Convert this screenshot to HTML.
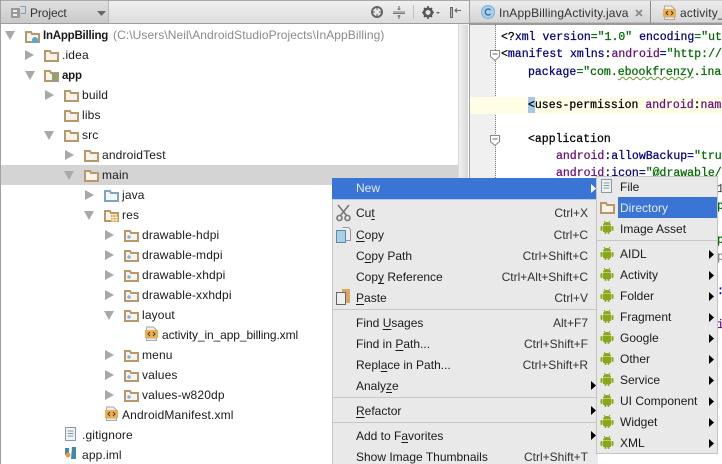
<!DOCTYPE html>
<html><head><meta charset="utf-8">
<style>
html,body{margin:0;padding:0;background:#fff}
#r{position:relative;width:722px;height:464px;overflow:hidden;background:#fff;font-family:"Liberation Sans",sans-serif;font-size:12px;color:#1a1a1a}
.t{position:absolute;white-space:nowrap;line-height:16px;letter-spacing:.15px}
.t b{font-size:11.5px;letter-spacing:-.22px}
.n{letter-spacing:0}
.b{position:absolute}
svg{position:absolute;overflow:visible}
.c{position:absolute;white-space:pre;font-family:"Liberation Mono",monospace;font-size:11.5px;line-height:16px;color:#000;-webkit-text-stroke:.25px}
.k{color:#000080}.g{color:#006a00}.p{color:#660e7a}
u{text-underline-offset:2px}
.s{text-align:right;color:#333;letter-spacing:0}
</style></head><body><div id="r">
<svg width="0" height="0" style="position:absolute"><defs>
<symbol id="fold" viewBox="0 0 15 13"><path d="M1 12V2h5l1 2h7v8z" fill="#f6f3ea" stroke="#b8986a" stroke-width="2"/></symbol>
<symbol id="res" viewBox="0 0 15 13"><path d="M1 12V2h5l1 2h7v8z" fill="#f5f5f2" stroke="#b8986a" stroke-width="2"/><circle cx="5" cy="8" r="1.8" fill="#8fb0cf"/></symbol>
<symbol id="xml" viewBox="0 0 13 15"><path d="M1.500 1h7l3 3v2h-10zM1.500 12h10v2.500h-10z" fill="#eee" stroke="#aaa"/><rect x="0" y="4" width="13" height="8" fill="#e8b050"/><path d="M5 6L3 8l2 2M8 6l2 2-2 2" fill="none" stroke="#5a3a10"/></symbol>
<symbol id="droid" viewBox="0 0 14 14"><path d="M4 1l1 1.500M10 1L9 2.500" stroke="#88a818"/><path d="M3 5.500C3 3 5 2 7 2s4 1 4 3.500z" fill="#88a818"/><rect x="3" y="6" width="8" height="6" fill="#88a818"/><rect x="0.500" y="6" width="2" height="5" rx="1" fill="#88a818"/><rect x="11.500" y="6" width="2" height="5" rx="1" fill="#88a818"/><rect x="4.500" y="11" width="2" height="3" rx="1" fill="#88a818"/><rect x="7.500" y="11" width="2" height="3" rx="1" fill="#88a818"/></symbol>
<symbol id="ad" viewBox="0 0 10 9"><path d="M0 0h10L5 9z" fill="#a8a8a8"/></symbol>
<symbol id="ar" viewBox="0 0 9 10"><path d="M0 0l9 5-9 5z" fill="#a8a8a8"/></symbol>
<symbol id="m" viewBox="0 0 5 9"><path d="M0 0l5 4.500L0 9z" fill="#000"/></symbol>
</defs></svg>

<!-- top bar -->
<div class="b" style="left:0;top:0;width:470px;height:23px;background:linear-gradient(#f0f0f0,#dcdcdc);border-top:1px solid #a8a8a8;box-sizing:border-box"></div>
<div class="b" style="left:1px;top:1px;width:107px;height:22px;background:linear-gradient(#e0e0e0,#c9c9c9);border-right:1px solid #b8b8b8"></div>
<div class="b" style="left:0;top:23px;width:470px;height:1px;background:#9c9c9c"></div>
<div class="b" style="left:0;top:0;width:1px;height:464px;background:#a0a0a0"></div>
<svg style="left:11px;top:6px" width="15" height="13"><rect x="0" y="2" width="9" height="10" fill="#999"/><rect x="2" y="4" width="4" height="2" fill="#eee"/><rect x="2" y="8" width="4" height="2" fill="#eee"/><path d="M9.500 .5h5v7h-5" fill="none" stroke="#7f9fb5"/></svg>
<div class="t" style="left:30px;top:5px;color:#333;letter-spacing:-.1px">Project</div>
<svg style="left:97px;top:11px" width="9" height="5"><path d="M0 0h9L4.500 5z" fill="#666"/></svg>
<svg style="left:371px;top:6px" width="13" height="13"><circle cx="6" cy="6" r="5" fill="none" stroke="#666" stroke-width="2"/><path d="M6 1v3M6 8v3M1 6h3M8 6h3" stroke="#666"/></svg>
<svg style="left:393px;top:6px" width="13" height="13"><path d="M0 6h12M0 7.500h12" stroke="#777"/><path d="M6 0v4M4.500 3h3M6 9v4M4.500 10h3" stroke="#666"/></svg>
<div class="b" style="left:413px;top:5px;width:1px;height:14px;background:#c0c0c0"></div>
<svg style="left:422px;top:6px" width="18" height="13"><circle cx="6" cy="6.500" r="3.800" fill="none" stroke="#555" stroke-width="2.600"/><path d="M6 0v2.500M6 10.500V13M0 6.500h2M10 6.500h2M2 2l1.500 1.500M8.500 9.500L10 11M2 11l1.500-1.500M8.500 3.500L10 2" stroke="#555" stroke-width="1.600"/><path d="M14 6h4l-2 2z" fill="#666"/></svg>
<svg style="left:450px;top:7px" width="12" height="11"><rect x=".5" y=".5" width="2" height="10" fill="#bbb" stroke="#666"/><path d="M5 3.500h6M7 1.500L5 3.500l2 2" fill="none" stroke="#666"/></svg>

<!-- tree scrollbar / divider -->
<div class="b" style="left:458px;top:24px;width:10px;height:440px;background:#f2f2f2;border-left:1px solid #d8d8d8;box-sizing:border-box"></div>
<div class="b" style="left:459px;top:25px;width:9px;height:439px;background:linear-gradient(90deg,#f0f0f0,#d8d8d8);border-radius:2px"></div>
<div class="b" style="left:469px;top:0;width:1px;height:464px;background:#a0a0a0"></div>

<!-- selected row -->
<div class="b" style="left:1px;top:165px;width:457px;height:20px;background:#d4d4d4"></div>

<!-- tree -->
<svg style="left:5px;top:31px" width="10" height="9"><use href="#ad"/></svg>
<svg style="left:25px;top:30px" width="15" height="13"><use href="#fold"/><circle cx="10" cy="10" r="3" fill="#55a5d8"/></svg>
<div class="t" style="left:43px;top:27px"><b>InAppBilling</b></div>
<div class="t" style="left:113px;top:27px;letter-spacing:.08px;color:#8a8a8a">(C:\Users\Neil\AndroidStudioProjects\InAppBilling)</div>

<svg style="left:25px;top:50px" width="9" height="10"><use href="#ar"/></svg>
<svg style="left:44px;top:49px" width="15" height="13"><use href="#fold"/></svg>
<div class="t" style="left:62px;top:47px">.idea</div>

<svg style="left:25px;top:71px" width="10" height="9"><use href="#ad"/></svg>
<svg style="left:44px;top:69px" width="15" height="13"><use href="#fold"/><rect x="8" y="4" width="6" height="9" fill="#999"/><rect x="9.500" y="5.500" width="3" height="5" fill="#8ab030"/></svg>
<div class="t" style="left:62px;top:67px"><b>app</b></div>

<svg style="left:45px;top:90px" width="9" height="10"><use href="#ar"/></svg>
<svg style="left:64px;top:89px" width="15" height="13"><use href="#fold"/></svg>
<div class="t" style="left:82px;top:87px">build</div>

<svg style="left:64px;top:109px" width="15" height="13"><use href="#fold"/></svg>
<div class="t" style="left:82px;top:107px">libs</div>

<svg style="left:44px;top:131px" width="10" height="9"><use href="#ad"/></svg>
<svg style="left:64px;top:129px" width="15" height="13"><use href="#fold"/></svg>
<div class="t" style="left:82px;top:127px">src</div>

<svg style="left:65px;top:150px" width="9" height="10"><use href="#ar"/></svg>
<svg style="left:84px;top:149px" width="15" height="13"><use href="#fold"/></svg>
<div class="t" style="left:102px;top:147px">androidTest</div>

<svg style="left:64px;top:171px" width="10" height="9"><use href="#ad"/></svg>
<svg style="left:84px;top:169px" width="15" height="13"><use href="#fold"/></svg>
<div class="t" style="left:102px;top:167px">main</div>

<svg style="left:85px;top:190px" width="9" height="10"><use href="#ar"/></svg>
<svg style="left:104px;top:189px" width="15" height="13"><path d="M1 12V2h5l1 2h7v8z" fill="#f4f8fb" stroke="#7da5c4" stroke-width="2"/></svg>
<div class="t" style="left:122px;top:187px">java</div>

<svg style="left:84px;top:211px" width="10" height="9"><use href="#ad"/></svg>
<svg style="left:104px;top:209px" width="15" height="13"><use href="#fold"/><rect x="7" y="6" width="7" height="7" fill="#e0a838"/><path d="M9 6v7M12 6v7M7 8.500h7M7 11h7" stroke="#fff" stroke-width=".7"/></svg>
<div class="t" style="left:122px;top:207px">res</div>

<svg style="left:105px;top:230px" width="9" height="10"><use href="#ar"/></svg>
<svg style="left:124px;top:229px" width="15" height="13"><use href="#res"/></svg>
<div class="t" style="left:142px;top:227px">drawable-hdpi</div>
<svg style="left:105px;top:250px" width="9" height="10"><use href="#ar"/></svg>
<svg style="left:124px;top:249px" width="15" height="13"><use href="#res"/></svg>
<div class="t" style="left:142px;top:247px">drawable-mdpi</div>
<svg style="left:105px;top:270px" width="9" height="10"><use href="#ar"/></svg>
<svg style="left:124px;top:269px" width="15" height="13"><use href="#res"/></svg>
<div class="t" style="left:142px;top:267px">drawable-xhdpi</div>
<svg style="left:105px;top:290px" width="9" height="10"><use href="#ar"/></svg>
<svg style="left:124px;top:289px" width="15" height="13"><use href="#res"/></svg>
<div class="t" style="left:142px;top:287px">drawable-xxhdpi</div>
<svg style="left:104px;top:311px" width="10" height="9"><use href="#ad"/></svg>
<svg style="left:124px;top:309px" width="15" height="13"><use href="#res"/></svg>
<div class="t" style="left:142px;top:307px">layout</div>
<svg style="left:145px;top:326px" width="13" height="15"><use href="#xml"/></svg>
<div class="t" style="left:162px;top:327px;letter-spacing:-.1px">activity_in_app_billing.xml</div>
<svg style="left:105px;top:350px" width="9" height="10"><use href="#ar"/></svg>
<svg style="left:124px;top:349px" width="15" height="13"><use href="#res"/></svg>
<div class="t" style="left:142px;top:347px">menu</div>
<svg style="left:105px;top:370px" width="9" height="10"><use href="#ar"/></svg>
<svg style="left:124px;top:369px" width="15" height="13"><use href="#res"/></svg>
<div class="t" style="left:142px;top:367px">values</div>
<svg style="left:105px;top:390px" width="9" height="10"><use href="#ar"/></svg>
<svg style="left:124px;top:389px" width="15" height="13"><use href="#res"/></svg>
<div class="t" style="left:142px;top:387px">values-w820dp</div>
<svg style="left:105px;top:406px" width="13" height="15"><use href="#xml"/></svg>
<div class="t" style="left:122px;top:407px">AndroidManifest.xml</div>
<svg style="left:65px;top:427px" width="11" height="15"><rect x=".5" y=".5" width="10" height="13" fill="#eef2f5" stroke="#8a9aa5"/><path d="M2.500 4h6M2.500 6.500h6M2.500 9h6" stroke="#8a9aa5"/></svg>
<div class="t" style="left:82px;top:427px">.gitignore</div>
<svg style="left:65px;top:447px" width="12" height="14"><path d="M0 1h4v7H0z M7 0h4v12H6z" fill="#3f87ad"/><circle cx="3" cy="8" r="2.500" fill="#e8a030"/></svg>
<div class="t" style="left:82px;top:447px">app.iml</div>

<!-- tabs -->
<div class="b" style="left:470px;top:0;width:252px;height:24px;background:linear-gradient(#cfcfcf,#bdbdbd)"></div>
<div class="b" style="left:470px;top:1px;width:180px;height:21px;background:linear-gradient(#ececec,#d4d4d4)"></div>
<div class="b" style="left:650px;top:1px;width:1px;height:22px;background:#8c8c8c"></div>
<div class="b" style="left:651px;top:1px;width:71px;height:21px;background:linear-gradient(#ebebeb,#d8d8d8)"></div>
<div class="b" style="left:470px;top:23px;width:252px;height:2px;background:#9a9a9a"></div>
<svg style="left:481px;top:5px" width="15" height="15"><circle cx="7" cy="7" r="6.500" fill="#a8d0ee" stroke="#7db0d8"/><path d="M9.500 5A3 3 0 1 0 9.500 9" fill="none" stroke="#2a5f8f" stroke-width="1.200"/></svg>
<div class="t" style="left:499px;top:5px;color:#333">InAppBillingActivity.java</div>
<svg style="left:635px;top:9px" width="8" height="8"><path d="M1 1l6 6M7 1L1 7" stroke="#8a8a8a" stroke-width="1.800"/></svg>
<svg style="left:663px;top:5px" width="13" height="15"><use href="#xml"/></svg>
<div class="t" style="left:680px;top:5px;color:#333">activity_in_app</div>

<!-- editor -->
<div class="b" style="left:470px;top:25px;width:26px;height:439px;background:#f0f0f0"></div>
<div class="b" style="left:495px;top:25px;width:0;height:439px;border-left:1px dotted #777"></div>
<div class="b" style="left:470px;top:97px;width:252px;height:17px;background:#fffde6"></div>
<div class="b" style="left:528px;top:97px;width:7px;height:16px;background:#a8c8ea"></div>
<svg style="left:490px;top:50px" width="10" height="11"><path d="M.5.5h9v6L5 10.500.5 6.500z" fill="#fff" stroke="#888"/><path d="M2.500 4h5" stroke="#666"/></svg>
<svg style="left:490px;top:135px" width="10" height="11"><path d="M.5.5h9v6L5 10.500.5 6.500z" fill="#fff" stroke="#888"/><path d="M2.500 4h5" stroke="#666"/></svg>
<div class="c" style="left:501px;top:30px">&lt;?<span class="k">xml</span> <span class="k">version</span><span class="g">="1.0"</span> <span class="k">encoding</span><span class="g">="ut</span></div>
<div class="c" style="left:501px;top:47px">&lt;<span class="k">manifest</span> <span class="k">xmlns</span>:<span class="p">android</span><span class="k">=</span><span class="g">"http://</span></div>
<div class="c" style="left:528px;top:65px"><span class="k">package</span><span class="g">="com.<span style="text-decoration:underline wavy #6a9a30;text-decoration-thickness:1px">ebookfrenzy</span>.ina</span></div>
<div class="c" style="left:528px;top:98px">&lt;uses-permission <span class="p">android</span>:<span class="p">nam</span></div>
<div class="c" style="left:528px;top:132px">&lt;application</div>
<div class="c" style="left:556px;top:149px"><span class="p">android</span><span class="k">:allowBackup=</span><span class="g">"tru</span></div>
<div class="c" style="left:556px;top:166px"><span class="p">android</span><span class="k">:icon=</span><span class="g">"@drawable/</span></div>
<div class="b" style="left:718px;top:178px;width:4px;height:286px;background:#fff"></div>
<div class="c" style="left:717px;top:182px;color:#555">1</div>
<div class="c" style="left:717px;top:199px" ><span class="g">p</span></div>
<div class="c" style="left:717px;top:233px"><span class="g">p</span></div>
<div class="c" style="left:717px;top:250px;color:#888">p</div>
<div class="c" style="left:717px;top:284px;color:#00d">:</div>
<div class="c" style="left:717px;top:318px"><span class="p">i</span></div>

<!-- main context menu -->
<div class="b" style="left:332px;top:178px;width:266px;height:286px;background:#e9e9e9;border-left:1px solid #c8c8c8;box-sizing:border-box"></div>
<div class="b" style="left:332px;top:178px;width:266px;height:21px;background:#3a74d4"></div>
<div class="b" style="left:332px;top:199px;width:266px;height:1px;background:#b8cbe8"></div>
<div class="t n" style="left:356px;top:180px;color:#e4ecf8">New</div>
<svg style="left:591px;top:184px" width="5" height="9"><path d="M0 0l5 4.500L0 9z" fill="#fff"/></svg>

<svg style="left:336px;top:205px" width="16" height="17"><path d="M2 0l9 11M13 0L4 11" stroke="#777" stroke-width="1.600"/><circle cx="3.500" cy="13" r="2.500" fill="none" stroke="#777" stroke-width="1.600"/><circle cx="11.500" cy="13" r="2.500" fill="none" stroke="#777" stroke-width="1.600"/></svg>
<div class="t n" style="left:356px;top:205px">Cu<u>t</u></div>
<div class="t s" style="right:134px;top:205px">Ctrl+X</div>
<svg style="left:336px;top:227px" width="15" height="16"><path d="M6.500.5h6l2 2v11h-5" fill="#eee" stroke="#999"/><rect x=".5" y="3.500" width="9" height="12" fill="#a8d0e8" stroke="#5d8aa8"/></svg>
<div class="t n" style="left:356px;top:227px"><u>C</u>opy</div>
<div class="t s" style="right:134px;top:227px">Ctrl+C</div>
<div class="t n" style="left:356px;top:248px">C<u>o</u>py Path</div>
<div class="t s" style="right:134px;top:248px">Ctrl+Shift+C</div>
<div class="t n" style="left:356px;top:269px">Cop<u>y</u> Reference</div>
<div class="t s" style="right:134px;top:269px">Ctrl+Alt+Shift+C</div>
<svg style="left:336px;top:289px" width="15" height="16"><rect x="6" y="0" width="8" height="14" fill="#d8a860"/><rect x=".5" y="3.500" width="9" height="12" fill="#eee" stroke="#666"/></svg>
<div class="t n" style="left:356px;top:290px"><u>P</u>aste</div>
<div class="t s" style="right:134px;top:290px">Ctrl+V</div>
<div class="b" style="left:333px;top:309px;width:265px;height:1px;background:#c8c8c8"></div>
<div class="t n" style="left:356px;top:315px">Find <u>U</u>sages</div>
<div class="t s" style="right:134px;top:315px">Alt+F7</div>
<div class="t n" style="left:356px;top:336px">Find in <u>P</u>ath...</div>
<div class="t s" style="right:134px;top:336px">Ctrl+Shift+F</div>
<div class="t n" style="left:356px;top:357px">Repl<u>a</u>ce in Path...</div>
<div class="t s" style="right:134px;top:357px">Ctrl+Shift+R</div>
<div class="t n" style="left:356px;top:378px">Analy<u>z</u>e</div>
<svg style="left:591px;top:381px" width="5" height="9"><use href="#m"/></svg>
<div class="b" style="left:333px;top:397px;width:265px;height:1px;background:#c8c8c8"></div>
<div class="t n" style="left:356px;top:403px"><u>R</u>efactor</div>
<svg style="left:591px;top:406px" width="5" height="9"><use href="#m"/></svg>
<div class="b" style="left:333px;top:422px;width:265px;height:1px;background:#c8c8c8"></div>
<div class="t n" style="left:356px;top:428px">Add to F<u>a</u>vorites</div>
<svg style="left:591px;top:431px" width="5" height="9"><use href="#m"/></svg>
<div class="t n" style="left:356px;top:449px">Show Image Thumbnails</div>
<div class="t s" style="right:134px;top:449px">Ctrl+Shift+T</div>

<!-- submenu -->
<div class="b" style="left:596px;top:176px;width:122px;height:278px;background:#e9e9e9;border:1px solid #c4c4c4;box-sizing:border-box"></div>
<div class="b" style="left:618px;top:197px;width:99px;height:21px;background:#3a74d4"></div>
<svg style="left:601px;top:179px" width="12" height="15"><rect x=".5" y=".5" width="10" height="13" fill="#eef2f5" stroke="#8a9aa5"/><path d="M2.500 4h6M2.500 6.500h6M2.500 9h6" stroke="#8a9aa5"/></svg>
<div class="t n" style="left:620px;top:179px">File</div>
<svg style="left:600px;top:201px" width="15" height="13"><use href="#fold"/></svg>
<div class="t n" style="left:620px;top:200px;color:#e4ecf8">Directory</div>
<svg style="left:600px;top:220px" width="14" height="14"><use href="#droid"/></svg>
<div class="t n" style="left:620px;top:221px">Image Asset</div>
<div class="b" style="left:597px;top:240px;width:120px;height:1px;background:#c8c8c8"></div>

<svg style="left:600px;top:246px" width="14" height="14"><use href="#droid"/></svg>
<div class="t n" style="left:620px;top:246px">AIDL</div>
<svg style="left:709px;top:250px" width="5" height="9"><use href="#m"/></svg>
<svg style="left:600px;top:267px" width="14" height="14"><use href="#droid"/></svg>
<div class="t n" style="left:620px;top:267px">Activity</div>
<svg style="left:709px;top:271px" width="5" height="9"><use href="#m"/></svg>
<svg style="left:600px;top:288px" width="14" height="14"><use href="#droid"/></svg>
<div class="t n" style="left:620px;top:288px">Folder</div>
<svg style="left:709px;top:292px" width="5" height="9"><use href="#m"/></svg>
<svg style="left:600px;top:309px" width="14" height="14"><use href="#droid"/></svg>
<div class="t n" style="left:620px;top:309px">Fragment</div>
<svg style="left:709px;top:313px" width="5" height="9"><use href="#m"/></svg>
<svg style="left:600px;top:330px" width="14" height="14"><use href="#droid"/></svg>
<div class="t n" style="left:620px;top:330px">Google</div>
<svg style="left:709px;top:334px" width="5" height="9"><use href="#m"/></svg>
<svg style="left:600px;top:351px" width="14" height="14"><use href="#droid"/></svg>
<div class="t n" style="left:620px;top:351px">Other</div>
<svg style="left:709px;top:355px" width="5" height="9"><use href="#m"/></svg>
<svg style="left:600px;top:372px" width="14" height="14"><use href="#droid"/></svg>
<div class="t n" style="left:620px;top:372px">Service</div>
<svg style="left:709px;top:376px" width="5" height="9"><use href="#m"/></svg>
<svg style="left:600px;top:393px" width="14" height="14"><use href="#droid"/></svg>
<div class="t n" style="left:620px;top:393px">UI Component</div>
<svg style="left:709px;top:397px" width="5" height="9"><use href="#m"/></svg>
<svg style="left:600px;top:414px" width="14" height="14"><use href="#droid"/></svg>
<div class="t n" style="left:620px;top:414px">Widget</div>
<svg style="left:709px;top:418px" width="5" height="9"><use href="#m"/></svg>
<svg style="left:600px;top:435px" width="14" height="14"><use href="#droid"/></svg>
<div class="t n" style="left:620px;top:435px">XML</div>
<svg style="left:709px;top:439px" width="5" height="9"><use href="#m"/></svg>
</div></body></html>
